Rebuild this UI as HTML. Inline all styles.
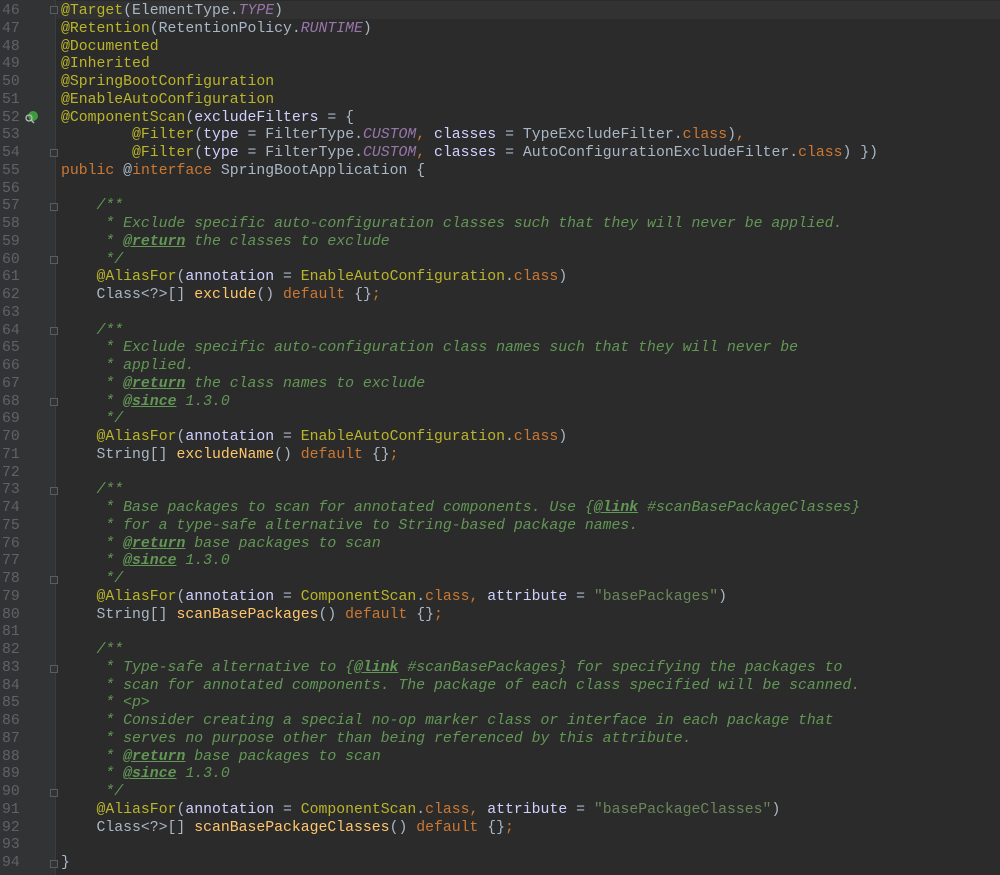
<!DOCTYPE html>
<html><head><meta charset="utf-8"><style>
html,body{margin:0;padding:0;background:#2b2b2b;width:1000px;height:875px;overflow:hidden}
.g{position:absolute;left:0;top:0;width:55px;height:875px;background:#313335;border-right:1px solid #3a3c3e}
.cl{position:absolute;left:56px;top:1px;width:944px;height:18px;background:#323232}
.wrap{position:absolute;left:0;top:3px;width:1000px;font-family:"Liberation Mono",monospace;font-size:14.8px;line-height:17.75px}
.l{height:17.75px;position:relative}
.n{position:absolute;left:2px;color:#606366;width:30px}
.c{position:absolute;left:61px;color:#a9b7c6;white-space:pre}
.a{color:#bbb529}.k{color:#cc7832}.m{color:#ffc66d}.p{color:#d0d0ff}.s{color:#6a8759}
.i{color:#9876aa;font-style:italic}
.d{color:#629755;font-style:italic}
.t{color:#629755;font-weight:bold;text-decoration:underline;font-style:italic}
.f{position:absolute;left:50px;width:8px;height:8px;border:1px solid #5a5d60;background:#313335;box-sizing:border-box}
</style></head><body>
<div class="g"></div>
<div class="cl"></div>
<svg style="position:absolute;left:24px;top:110px" width="14" height="14"><circle cx="9" cy="6" r="5" fill="#3d9b3d"/><circle cx="5" cy="8" r="3" fill="none" stroke="#bbb" stroke-width="1.3"/><line x1="7" y1="10" x2="10" y2="13" stroke="#bbb" stroke-width="1.3"/></svg>
<div class="f" style="top:6px"></div><div class="f" style="top:149px"></div>
<div class="f" style="top:203px"></div><div class="f" style="top:256px"></div>
<div class="f" style="top:327px"></div><div class="f" style="top:398px"></div>
<div class="f" style="top:487px"></div><div class="f" style="top:576px"></div>
<div class="f" style="top:665px"></div><div class="f" style="top:789px"></div>
<div class="f" style="top:860px"></div>
<div class="wrap">
<div class="l"><span class="n">46</span><span class="c"><span class="a">@Target</span>(ElementType.<span class="i">TYPE</span>)</span></div>
<div class="l"><span class="n">47</span><span class="c"><span class="a">@Retention</span>(RetentionPolicy.<span class="i">RUNTIME</span>)</span></div>
<div class="l"><span class="n">48</span><span class="c"><span class="a">@Documented</span></span></div>
<div class="l"><span class="n">49</span><span class="c"><span class="a">@Inherited</span></span></div>
<div class="l"><span class="n">50</span><span class="c"><span class="a">@SpringBootConfiguration</span></span></div>
<div class="l"><span class="n">51</span><span class="c"><span class="a">@EnableAutoConfiguration</span></span></div>
<div class="l"><span class="n">52</span><span class="c"><span class="a">@ComponentScan</span>(<span class="p">excludeFilters</span> = {</span></div>
<div class="l"><span class="n">53</span><span class="c">        <span class="a">@Filter</span>(<span class="p">type</span> = FilterType.<span class="i">CUSTOM</span><span class="k">, </span><span class="p">classes</span> = TypeExcludeFilter.<span class="k">class</span>)<span class="k">,</span></span></div>
<div class="l"><span class="n">54</span><span class="c">        <span class="a">@Filter</span>(<span class="p">type</span> = FilterType.<span class="i">CUSTOM</span><span class="k">, </span><span class="p">classes</span> = AutoConfigurationExcludeFilter.<span class="k">class</span>) })</span></div>
<div class="l"><span class="n">55</span><span class="c"><span class="k">public </span>@<span class="k">interface </span>SpringBootApplication {</span></div>
<div class="l"><span class="n">56</span></div>
<div class="l"><span class="n">57</span><span class="c d">    /**</span></div>
<div class="l"><span class="n">58</span><span class="c d">     * Exclude specific auto-configuration classes such that they will never be applied.</span></div>
<div class="l"><span class="n">59</span><span class="c d">     * <span class="t">@return</span> the classes to exclude</span></div>
<div class="l"><span class="n">60</span><span class="c d">     */</span></div>
<div class="l"><span class="n">61</span><span class="c">    <span class="a">@AliasFor</span>(<span class="p">annotation</span> = <span class="a">EnableAutoConfiguration</span>.<span class="k">class</span>)</span></div>
<div class="l"><span class="n">62</span><span class="c">    Class&lt;?&gt;[] <span class="m">exclude</span>() <span class="k">default </span>{}<span class="k">;</span></span></div>
<div class="l"><span class="n">63</span></div>
<div class="l"><span class="n">64</span><span class="c d">    /**</span></div>
<div class="l"><span class="n">65</span><span class="c d">     * Exclude specific auto-configuration class names such that they will never be</span></div>
<div class="l"><span class="n">66</span><span class="c d">     * applied.</span></div>
<div class="l"><span class="n">67</span><span class="c d">     * <span class="t">@return</span> the class names to exclude</span></div>
<div class="l"><span class="n">68</span><span class="c d">     * <span class="t">@since</span> 1.3.0</span></div>
<div class="l"><span class="n">69</span><span class="c d">     */</span></div>
<div class="l"><span class="n">70</span><span class="c">    <span class="a">@AliasFor</span>(<span class="p">annotation</span> = <span class="a">EnableAutoConfiguration</span>.<span class="k">class</span>)</span></div>
<div class="l"><span class="n">71</span><span class="c">    String[] <span class="m">excludeName</span>() <span class="k">default </span>{}<span class="k">;</span></span></div>
<div class="l"><span class="n">72</span></div>
<div class="l"><span class="n">73</span><span class="c d">    /**</span></div>
<div class="l"><span class="n">74</span><span class="c d">     * Base packages to scan for annotated components. Use {<span class="t">@link</span> #scanBasePackageClasses}</span></div>
<div class="l"><span class="n">75</span><span class="c d">     * for a type-safe alternative to String-based package names.</span></div>
<div class="l"><span class="n">76</span><span class="c d">     * <span class="t">@return</span> base packages to scan</span></div>
<div class="l"><span class="n">77</span><span class="c d">     * <span class="t">@since</span> 1.3.0</span></div>
<div class="l"><span class="n">78</span><span class="c d">     */</span></div>
<div class="l"><span class="n">79</span><span class="c">    <span class="a">@AliasFor</span>(<span class="p">annotation</span> = <span class="a">ComponentScan</span>.<span class="k">class</span><span class="k">, </span><span class="p">attribute</span> = <span class="s">"basePackages"</span>)</span></div>
<div class="l"><span class="n">80</span><span class="c">    String[] <span class="m">scanBasePackages</span>() <span class="k">default </span>{}<span class="k">;</span></span></div>
<div class="l"><span class="n">81</span></div>
<div class="l"><span class="n">82</span><span class="c d">    /**</span></div>
<div class="l"><span class="n">83</span><span class="c d">     * Type-safe alternative to {<span class="t">@link</span> #scanBasePackages} for specifying the packages to</span></div>
<div class="l"><span class="n">84</span><span class="c d">     * scan for annotated components. The package of each class specified will be scanned.</span></div>
<div class="l"><span class="n">85</span><span class="c d">     * &lt;p&gt;</span></div>
<div class="l"><span class="n">86</span><span class="c d">     * Consider creating a special no-op marker class or interface in each package that</span></div>
<div class="l"><span class="n">87</span><span class="c d">     * serves no purpose other than being referenced by this attribute.</span></div>
<div class="l"><span class="n">88</span><span class="c d">     * <span class="t">@return</span> base packages to scan</span></div>
<div class="l"><span class="n">89</span><span class="c d">     * <span class="t">@since</span> 1.3.0</span></div>
<div class="l"><span class="n">90</span><span class="c d">     */</span></div>
<div class="l"><span class="n">91</span><span class="c">    <span class="a">@AliasFor</span>(<span class="p">annotation</span> = <span class="a">ComponentScan</span>.<span class="k">class</span><span class="k">, </span><span class="p">attribute</span> = <span class="s">"basePackageClasses"</span>)</span></div>
<div class="l"><span class="n">92</span><span class="c">    Class&lt;?&gt;[] <span class="m">scanBasePackageClasses</span>() <span class="k">default </span>{}<span class="k">;</span></span></div>
<div class="l"><span class="n">93</span></div>
<div class="l"><span class="n">94</span><span class="c">}</span></div>
</div>
</body></html>
